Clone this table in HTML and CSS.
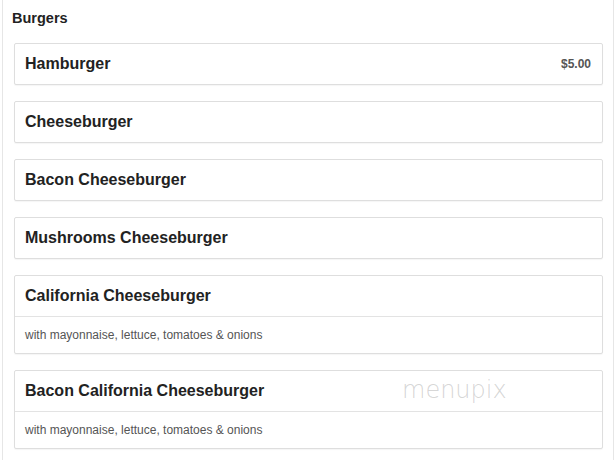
FILE: index.html
```html
<!DOCTYPE html>
<html>
<head>
<meta charset="utf-8">
<link rel="stylesheet" href="styles.css">
</head>
<body>
<div class="section">
  <h2 class="section-title">Burgers</h2>
  <div class="items">
    <div class="item">
      <div class="item-head"><span class="item-name">Hamburger</span><span class="item-price">$5.00</span></div>
    </div>
    <div class="item">
      <div class="item-head"><span class="item-name">Cheeseburger</span></div>
    </div>
    <div class="item">
      <div class="item-head"><span class="item-name">Bacon Cheeseburger</span></div>
    </div>
    <div class="item">
      <div class="item-head"><span class="item-name">Mushrooms Cheeseburger</span></div>
    </div>
    <div class="item">
      <div class="item-head"><span class="item-name">California Cheeseburger</span></div>
      <div class="item-desc">with mayonnaise, lettuce, tomatoes &amp; onions</div>
    </div>
    <div class="item">
      <div class="item-head"><span class="item-name">Bacon California Cheeseburger</span></div>
      <div class="item-desc">with mayonnaise, lettuce, tomatoes &amp; onions</div>
    </div>
  </div>
  <div class="watermark">menupix</div>
</div>
</body>
</html>
```
FILE: styles.css
```css
html, body {
  margin: 0;
  padding: 0;
  background: #fff;
  font-family: "Liberation Sans", Arial, sans-serif;
}
.section {
  position: relative;
  margin: 0 2px;
  border: 1px solid #e6e6e6;
  border-top: none;
  padding: 0 10px 0 11px;
  height: 470px;
  box-sizing: border-box;
}
.section-title {
  margin: 0 0 0 -2px;
  padding: 10px 0 0 0;
  height: 32px;
  box-sizing: border-box;
  font-size: 14.5px;
  font-weight: bold;
  color: #222;
  line-height: 16px;
}
.items {
  display: flex;
  flex-direction: column;
  gap: 16px;
  padding-top: 11px;
}
.item {
  border: 1px solid #dedede;
  border-radius: 2px;
  box-shadow: 0 1px 1px rgba(0,0,0,0.04);
  background: #fff;
}
.item-head {
  display: flex;
  justify-content: space-between;
  align-items: center;
  height: 40px;
  padding: 0 11px 0 10px;
}
.item-name {
  font-size: 16px;
  font-weight: bold;
  color: #222;
}
.item-price {
  font-size: 12px;
  font-weight: bold;
  color: #555;
}
.item-desc {
  border-top: 1px solid #e3e3e3;
  height: 36px;
  display: flex;
  align-items: center;
  padding: 0 10px;
  font-size: 12px;
  color: #555;
}
.watermark {
  position: absolute;
  left: 399px;
  top: 376px;
  font-family: "DejaVu Sans", sans-serif;
  font-weight: 200;
  font-size: 24px;
  letter-spacing: 0;
  color: rgba(150,150,150,0.4);
}
```
